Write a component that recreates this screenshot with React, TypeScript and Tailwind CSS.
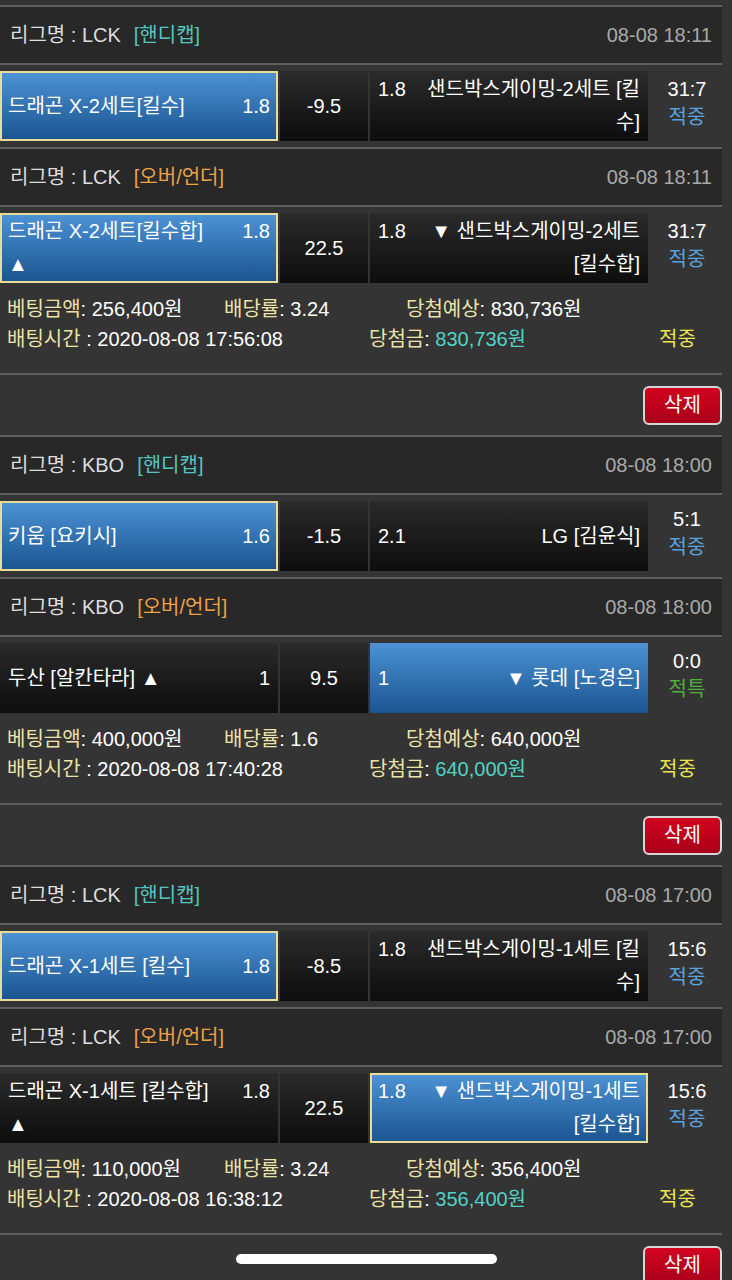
import React from 'react';

type Match = {
  league: string;
  kind: 'hc' | 'ou';
  time: string;
  home: string[];
  homeOdds: string;
  homeSel?: 'border' | 'plain';
  line: string;
  away: string[];
  awayOdds: string;
  awaySel?: 'border' | 'plain';
  score: string;
  result: string;
  resultColor: string;
};

type Slip = {
  matches: Match[];
  amount: string;
  rate: string;
  expect: string;
  betTime: string;
  win: string;
};

const slips: Slip[] = [
  {
    matches: [
      {
        league: 'LCK', kind: 'hc', time: '08-08 18:11',
        home: ['드래곤 X-2세트[킬수]'], homeOdds: '1.8', homeSel: 'border',
        line: '-9.5',
        away: ['샌드박스게이밍-2세트 [킬', '수]'], awayOdds: '1.8',
        score: '31:7', result: '적중', resultColor: 'text-[#5ba3de]',
      },
      {
        league: 'LCK', kind: 'ou', time: '08-08 18:11',
        home: ['드래곤 X-2세트[킬수합]', '▲'], homeOdds: '1.8', homeSel: 'border',
        line: '22.5',
        away: ['▼ 샌드박스게이밍-2세트', '[킬수합]'], awayOdds: '1.8',
        score: '31:7', result: '적중', resultColor: 'text-[#5ba3de]',
      },
    ],
    amount: '256,400원', rate: '3.24', expect: '830,736원',
    betTime: '2020-08-08 17:56:08', win: '830,736원',
  },
  {
    matches: [
      {
        league: 'KBO', kind: 'hc', time: '08-08 18:00',
        home: ['키움 [요키시]'], homeOdds: '1.6', homeSel: 'border',
        line: '-1.5',
        away: ['LG [김윤식]'], awayOdds: '2.1',
        score: '5:1', result: '적중', resultColor: 'text-[#5ba3de]',
      },
      {
        league: 'KBO', kind: 'ou', time: '08-08 18:00',
        home: ['두산 [알칸타라] ▲'], homeOdds: '1',
        line: '9.5',
        away: ['▼ 롯데 [노경은]'], awayOdds: '1', awaySel: 'plain',
        score: '0:0', result: '적특', resultColor: 'text-[#4fae3c]',
      },
    ],
    amount: '400,000원', rate: '1.6', expect: '640,000원',
    betTime: '2020-08-08 17:40:28', win: '640,000원',
  },
  {
    matches: [
      {
        league: 'LCK', kind: 'hc', time: '08-08 17:00',
        home: ['드래곤 X-1세트 [킬수]'], homeOdds: '1.8', homeSel: 'border',
        line: '-8.5',
        away: ['샌드박스게이밍-1세트 [킬', '수]'], awayOdds: '1.8',
        score: '15:6', result: '적중', resultColor: 'text-[#5ba3de]',
      },
      {
        league: 'LCK', kind: 'ou', time: '08-08 17:00',
        home: ['드래곤 X-1세트 [킬수합]', '▲'], homeOdds: '1.8',
        line: '22.5',
        away: ['▼ 샌드박스게이밍-1세트', '[킬수합]'], awayOdds: '1.8', awaySel: 'border',
        score: '15:6', result: '적중', resultColor: 'text-[#5ba3de]',
      },
    ],
    amount: '110,000원', rate: '3.24', expect: '356,400원',
    betTime: '2020-08-08 16:38:12', win: '356,400원',
  },
];

const cellBg = (sel?: 'border' | 'plain') => {
  if (sel === 'border') return 'bg-gradient-to-b from-[#4c92d4] to-[#1b5591] border-2 border-[#e9dc98] px-[6px]';
  if (sel === 'plain') return 'bg-gradient-to-b from-[#4c92d4] to-[#1b5591] px-[8px]';
  return 'bg-gradient-to-b from-[#2b2b2b] to-[#0d0d0d] px-[8px]';
};

const Line = () => <div className="h-[2px] w-[722px] bg-[#5f5f5f]" />;

const MatchRow = ({ m }: { m: Match }) => (
  <>
    <Line />
    <div className="h-[56px] w-[722px] bg-[#282828] flex items-center justify-between px-[10px]">
      <div className="text-[#dedede]">
        리그명 : {m.league}
        {m.kind === 'hc' ? (
          <span className="ml-[13px] text-[#54c6bf]">[핸디캡]</span>
        ) : (
          <span className="ml-[13px] text-[#eda246]">[오버/언더]</span>
        )}
      </div>
      <div className="text-[#a9a9a9]">{m.time}</div>
    </div>
    <Line />
    <div className="w-[722px] py-[6px] flex">
      {/* home side */}
      <div className={`w-[278px] shrink-0 h-[70px] flex flex-col justify-center leading-[33px] text-white ${cellBg(m.homeSel)}`}>
        <div className="flex justify-between whitespace-nowrap">
          <span>{m.home[0]}</span>
          <span>{m.homeOdds}</span>
        </div>
        {m.home[1] && <div>{m.home[1]}</div>}
      </div>
      {/* handicap / total */}
      <div className="ml-[2px] w-[88px] shrink-0 h-[70px] flex items-center justify-center text-white bg-gradient-to-b from-[#2b2b2b] to-[#0d0d0d]">
        {m.line}
      </div>
      {/* away side */}
      <div className={`ml-[2px] w-[278px] shrink-0 h-[70px] flex flex-col justify-center leading-[33px] text-white ${cellBg(m.awaySel)}`}>
        <div className="flex justify-between whitespace-nowrap">
          <span>{m.awayOdds}</span>
          <span>{m.away[0]}</span>
        </div>
        {m.away[1] && <div className="text-right">{m.away[1]}</div>}
      </div>
      <div className="w-[74px] shrink-0 h-[70px] pb-[6px] pl-[4px] flex flex-col items-center justify-center leading-[28px]">
        <span className="text-white">{m.score}</span>
        <span className={m.resultColor}>{m.result}</span>
      </div>
    </div>
  </>
);

const SlipBlock = ({ s }: { s: Slip }) => (
  <div>
    {s.matches.map((m, i) => (
      <MatchRow key={i} m={m} />
    ))}
    <div className="h-[84px] w-[722px] pt-[5px] leading-[30px] text-white">
      <div className="flex whitespace-nowrap">
        <span className="w-[224px] pl-[7px]">
          <span className="text-[#ece3a8]">베팅금액</span>: {s.amount}
        </span>
        <span className="w-[182px]">
          <span className="text-[#ece3a8]">배당률</span>: {s.rate}
        </span>
        <span>
          <span className="text-[#ece3a8]">당첨예상</span>: {s.expect}
        </span>
      </div>
      <div className="flex whitespace-nowrap">
        <span className="w-[369px] pl-[7px]">
          <span className="text-[#ece3a8]">배팅시간</span> : {s.betTime}
        </span>
        <span className="w-[290px]">
          <span className="text-[#ece3a8]">당첨금</span>: <span className="text-[#52d2c6]">{s.win}</span>
        </span>
        <span className="text-[#ece64e]">적중</span>
      </div>
    </div>
    <Line />
    <div className="h-[60px] w-[722px] flex items-center justify-end">
      <button className="w-[79px] h-[39px] rounded-[6px] border-2 border-[#d6d6d6] bg-gradient-to-b from-[#d3041f] to-[#a9001a] text-white">
        삭제
      </button>
    </div>
  </div>
);

export default function App() {
  return (
    <div className="relative h-[1280px] w-full overflow-hidden bg-[#343434] text-[20px] font-['Liberation_Sans','Noto_Sans_CJK_KR',sans-serif]">
      <div className="h-[5px]" />
      {slips.map((s, i) => (
        <SlipBlock key={i} s={s} />
      ))}
      {/* iOS home indicator */}
      <div className="absolute left-[236px] top-[1254px] w-[261px] h-[10px] rounded-full bg-white" />
    </div>
  );
}
